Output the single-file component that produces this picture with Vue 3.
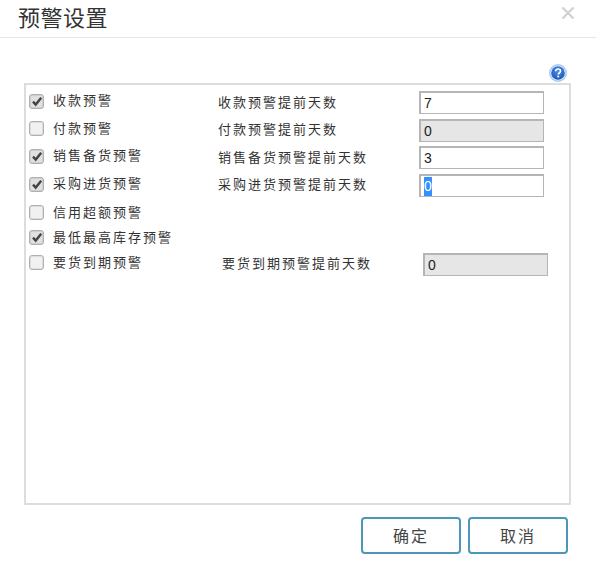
<script setup>
const leftRows = [
  { text: '收款预警', checked: true, cls: 'l1' },
  { text: '付款预警', checked: false, cls: 'l2' },
  { text: '销售备货预警', checked: true, cls: 'l3' },
  { text: '采购进货预警', checked: true, cls: 'l4' },
  { text: '信用超额预警', checked: false, cls: 'l5' },
  { text: '最低最高库存预警', checked: true, cls: 'l6' },
  { text: '要货到期预警', checked: false, cls: 'l7' }
]
const rightRows = [
  { text: '收款预警提前天数', value: '7' },
  { text: '付款预警提前天数', value: '0', disabled: true },
  { text: '销售备货预警提前天数', value: '3' },
  { text: '采购进货预警提前天数', value: '0', selected: true }
]
</script>

<template>
  <div class="dialog">
    <header class="head">
      <h1 class="title">预警设置</h1>
      <svg class="close" width="14" height="14" viewBox="0 0 14 14">
        <path d="M1.5 1.5 12.5 12.5M12.5 1.5 1.5 12.5" stroke="#d2d2d2" stroke-width="2.4" fill="none" />
      </svg>
    </header>

    <div class="help-row">
      <svg class="help" width="18" height="18" viewBox="0 0 18 18">
        <defs>
          <radialGradient id="hg" cx="50%" cy="35%" r="65%">
            <stop offset="0%" stop-color="#4f8fe8" />
            <stop offset="100%" stop-color="#1c58b8" />
          </radialGradient>
        </defs>
        <circle cx="9" cy="9" r="9" fill="#a9c9f2" />
        <circle cx="9" cy="9" r="7.6" fill="#e4effc" />
        <circle cx="9" cy="9" r="6.8" fill="url(#hg)" />
        <path d="M6.6 7.2C6.7 5.7 7.8 5 9.1 5c1.4 0 2.4.8 2.4 2 0 1-.6 1.5-1.3 2-.6.4-.9.7-.9 1.5" stroke="#fff" stroke-width="1.6" fill="none" />
        <circle cx="9.2" cy="12.6" r="1" fill="#fff" />
      </svg>
    </div>

    <section class="panel">
      <div class="left">
        <label v-for="r in leftRows" :key="r.text" class="check-row" :class="r.cls">
          <span class="box" :class="{ on: r.checked }">
            <svg v-if="r.checked" width="12" height="11" viewBox="0 0 12 11">
              <path d="M2 5.6 4.7 8.6 10.2 1.8" stroke="#444" stroke-width="2.4" fill="none" />
            </svg>
          </span>
          <span class="text">{{ r.text }}</span>
        </label>
      </div>
      <div class="right">
        <div v-for="r in rightRows" :key="r.text" class="field">
          <span class="text">{{ r.text }}</span>
          <div class="input" :class="{ disabled: r.disabled }">
            <span :class="{ sel: r.selected }">{{ r.value }}</span>
          </div>
        </div>
        <div class="field last">
          <span class="text">要货到期预警提前天数</span>
          <div class="input disabled"><span>0</span></div>
        </div>
      </div>
    </section>

    <footer class="foot">
      <button class="btn" type="button">确定</button>
      <button class="btn" type="button">取消</button>
    </footer>
  </div>
</template>

<style>
html, body { margin: 0; background: #fff; }
</style>

<style scoped>
.dialog {
  width: 596px;
  height: 578px;
  overflow: hidden;
  box-sizing: border-box;
  font-family: "Noto Sans CJK SC", "Liberation Sans", sans-serif;
  color: #333;
}
.head {
  height: 37px;
  border-bottom: 1px solid #e5e5e5;
  display: flex;
  justify-content: space-between;
  align-items: flex-start;
  padding: 0 21px 0 18px;
}
.title {
  margin: 0;
  font-size: 22px;
  font-weight: 400;
  line-height: 32px;
  letter-spacing: 0.5px;
  color: #333;
}
.close { margin-top: 6px; }
.help-row {
  height: 45px;
  display: flex;
  justify-content: flex-end;
  align-items: flex-end;
  padding-right: 29px;
}
.help { margin-bottom: 1px; }
.panel {
  margin-left: 24px;
  width: 547px;
  height: 422px;
  box-sizing: border-box;
  border: 2px solid #ddd;
  display: flex;
}
.left {
  width: 192px;
  padding-top: 6px;
  padding-left: 3px;
  box-sizing: border-box;
}
.check-row {
  display: flex;
  align-items: center;
  gap: 9px;
  height: 20px;
}
.l2, .l3 { margin-top: 7.5px; }
.l4 { margin-top: 8px; }
.l5 { margin-top: 8.5px; }
.l6, .l7 { margin-top: 5px; }
.box {
  width: 13px;
  height: 13px;
  border: 1px solid #b0b0b0;
  border-radius: 3px;
  background: #f1f1f1;
  box-shadow: inset 0 0 0 1px #ddd;
  display: flex;
  align-items: center;
  justify-content: center;
  flex: none;
}
.box.on { background: #e0e0e0; box-shadow: inset 0 0 0 1px #cfcfcf; }
.text {
  font-size: 13px;
  letter-spacing: 2px;
  line-height: 20px;
  padding-bottom: 2px;
  white-space: nowrap;
  color: #333;
}
.right {
  flex: 1;
  padding-top: 6.2px;
}
.field {
  display: flex;
  align-items: center;
  height: 23px;
  margin-bottom: 4.5px;
}
.field .text { width: 201px; flex: none; }
.field.last {
  margin-top: 56px;
  margin-left: 4px;
}
.input {
  width: 125px;
  height: 23px;
  box-sizing: border-box;
  border: 1px solid #b5b5b5;
  border-width: 2px 1px 1px 2px;
  background: #fff;
  padding-left: 3px;
  font-family: "Liberation Sans", sans-serif;
  font-size: 14px;
  line-height: 20px;
  color: #222;
  flex: none;
}
.input.disabled { background: #e6e6e6; }
.sel { background: #3390ff; color: #fff; display: inline-block; line-height: 19px; }
.foot {
  display: flex;
  justify-content: flex-end;
  gap: 7px;
  padding: 12px 28px 0 0;
}
.btn {
  width: 100px;
  height: 37px;
  box-sizing: border-box;
  background: #fff;
  border: 2px solid #4b97b9;
  border-radius: 4px;
  font-family: inherit;
  font-size: 16px;
  letter-spacing: 2px;
  color: #444;
  padding: 0 0 2px;
}
</style>
